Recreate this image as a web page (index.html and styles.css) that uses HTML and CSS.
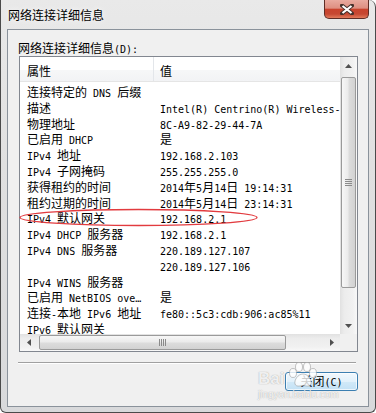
FILE: index.html
```html
<!DOCTYPE html>
<html lang="zh-CN">
<head>
    <meta charset="UTF-8">
    <title>网络连接详细信息</title>
    <link rel="stylesheet" href="styles.css">
</head>
<body>
    <div class="window">
        <div class="titlebar">
            <span class="title">网络连接详细信息</span>
            <div class="close">
                <svg width="14" height="11" viewBox="0 0 14 11">
                    <path d="M2 1.5 L12 9.5 M12 1.5 L2 9.5" stroke="#47312c" stroke-width="4" stroke-linecap="round"/>
                    <path d="M2.5 2 L11.5 9 M11.5 2 L2.5 9" stroke="#fff" stroke-width="2.2"/>
                </svg>
            </div>
        </div>
        <div class="client">
            <div class="caption">网络连接详细信息<span class="m">(D):</span></div>
            <div class="listview">
                <div class="lv-body">
                    <div class="lv-head">
                        <div class="h1">属性</div>
                        <div class="h2">值</div>
                    </div>
                    <div class="rows">
                        <div class="row"><div class="k">连接特定的<span class="m"> DNS </span>后缀</div><div class="v"></div></div>
                        <div class="row"><div class="k">描述</div><div class="v"><span class="m">Intel(R) Centrino(R) Wireless-N 1030</span></div></div>
                        <div class="row"><div class="k">物理地址</div><div class="v"><span class="m">8C-A9-82-29-44-7A</span></div></div>
                        <div class="row"><div class="k">已启用<span class="m"> DHCP</span></div><div class="v">是</div></div>
                        <div class="row"><div class="k"><span class="m">IPv4 </span>地址</div><div class="v"><span class="m">192.168.2.103</span></div></div>
                        <div class="row"><div class="k"><span class="m">IPv4 </span>子网掩码</div><div class="v"><span class="m">255.255.255.0</span></div></div>
                        <div class="row"><div class="k">获得租约的时间</div><div class="v"><span class="m">2014</span>年<span class="m">5</span>月<span class="m">14</span>日<span class="m"> 19:14:31</span></div></div>
                        <div class="row"><div class="k">租约过期的时间</div><div class="v"><span class="m">2014</span>年<span class="m">5</span>月<span class="m">14</span>日<span class="m"> 23:14:31</span></div></div>
                        <div class="row"><div class="k"><span class="m">IPv4 </span>默认网关</div><div class="v"><span class="m">192.168.2.1</span></div></div>
                        <div class="row"><div class="k"><span class="m">IPv4 DHCP </span>服务器</div><div class="v"><span class="m">192.168.2.1</span></div></div>
                        <div class="row"><div class="k"><span class="m">IPv4 DNS </span>服务器</div><div class="v"><span class="m">220.189.127.107</span></div></div>
                        <div class="row"><div class="k"></div><div class="v"><span class="m">220.189.127.106</span></div></div>
                        <div class="row"><div class="k"><span class="m">IPv4 WINS </span>服务器</div><div class="v"></div></div>
                        <div class="row"><div class="k">已启用<span class="m"> NetBIOS ove…</span></div><div class="v">是</div></div>
                        <div class="row"><div class="k">连接<span class="m">-</span>本地<span class="m"> IPv6 </span>地址</div><div class="v"><span class="m">fe80::5c3:cdb:906:ac85%11</span></div></div>
                        <div class="row"><div class="k"><span class="m">IPv6 </span>默认网关</div><div class="v"></div></div>
                    </div>
                </div>
                <div class="vscroll">
                    <div class="arrow">
                        <svg width="7" height="4" viewBox="0 0 7 4"><polygon points="3.5,0 7,4 0,4" fill="#505050"/></svg>
                    </div>
                    <div class="vthumb">
                        <svg width="7" height="7" viewBox="0 0 7 7">
                            <path d="M0 0.5H7M0 2.5H7M0 4.5H7M0 6.5H7" stroke="#8a8a8a" stroke-width="1"/>
                        </svg>
                    </div>
                    <div class="arrow down">
                        <svg width="7" height="4" viewBox="0 0 7 4"><polygon points="0,0 7,0 3.5,4" fill="#505050"/></svg>
                    </div>
                </div>
                <div class="hscroll">
                    <div class="arrow">
                        <svg width="4" height="7" viewBox="0 0 4 7"><polygon points="4,0 4,7 0,3.5" fill="#505050"/></svg>
                    </div>
                    <div class="hthumb">
                        <svg width="7" height="7" viewBox="0 0 7 7">
                            <path d="M0.5 0V7M2.5 0V7M4.5 0V7M6.5 0V7" stroke="#8a8a8a" stroke-width="1"/>
                        </svg>
                    </div>
                    <div class="arrow right">
                        <svg width="4" height="7" viewBox="0 0 4 7"><polygon points="0,0 4,3.5 0,7" fill="#505050"/></svg>
                    </div>
                </div>
                <div class="corner"></div>
            </div>
            <div class="sep"></div>
            <div class="buttons">
                <button type="button" class="btn">关闭<span class="m">(C)</span></button>
            </div>
        </div>

        <!-- red marker drawn over the list -->
        <svg class="mark" width="376" height="413" viewBox="0 0 376 413">
            <ellipse cx="138.5" cy="217.5" rx="118.5" ry="8" fill="none" stroke="#e23b3f" stroke-width="1.3"/>
        </svg>

        <div class="wm">
            <span class="wm-bai">Bai</span>
            <svg class="wm-paw" width="30" height="26" viewBox="0 0 30 26">
                <g fill="rgba(255,255,255,0.8)" stroke="rgba(140,140,140,0.5)" stroke-width="1">
                    <ellipse cx="5" cy="11" rx="3.5" ry="4.5"/>
                    <ellipse cx="11" cy="5" rx="3.5" ry="4.5"/>
                    <ellipse cx="19" cy="5" rx="3.5" ry="4.5"/>
                    <ellipse cx="25" cy="11" rx="3.5" ry="4.5"/>
                    <path d="M15 12 C10 12 6 18 7 22 C8 25 12 24 15 23.5 C18 24 22 25 23 22 C24 18 20 12 15 12 Z"/>
                </g>
            </svg>
            <div class="wm-url">jingyan.baidu.com</div>
        </div>
    </div>
</body>
</html>
```

FILE: styles.css
```css
body {
    margin: 0;
    font-family: "Noto Sans CJK SC", sans-serif;
    font-size: 12px;
    color: #000;
}
.window {
    position: relative;
    width: 376px;
    height: 413px;
    box-sizing: border-box;
    padding: 0 6px 5px;
    border: 1px solid #4a4a4a;
    border-top: 0;
    border-radius: 0 7px 6px 6px;
    background: linear-gradient(#e9e9e9, #e0e0e0 40%, #d8d9db);
    display: flex;
    flex-direction: column;
}
.titlebar {
    height: 29px;
    display: flex;
    flex: none;
}
.title {
    padding: 7px 0 0 1px;
    line-height: 16px;
    text-shadow: 0 0 6px #fff;
}
.close {
    margin-left: auto;
    width: 45px;
    height: 19px;
    box-sizing: border-box;
    border: 1px solid #5e2d26;
    border-top: 0;
    border-radius: 0 0 5px 5px;
    background: linear-gradient(#e9aa9f 0%, #de8f81 45%, #c9432d 52%, #c64832 78%, #e27a5b 100%);
    display: flex;
    align-items: center;
    justify-content: center;
}
.client {
    flex: 1;
    border: 1px solid #8a929b;
    background: #f0f0f0;
    padding: 9px 10px 0 11px;
    display: flex;
    flex-direction: column;
}
.caption {
    height: 17px;
    line-height: 17px;
    margin-left: -1px;
}
.m {
    font-family: "DejaVu Sans Mono", "Liberation Mono", monospace;
    font-size: 10px;
}

/* list view */
.listview {
    width: 339px;
    height: 296px;
    box-sizing: border-box;
    border: 1px solid #828790;
    background: #fff;
    display: grid;
    grid-template-columns: 1fr 17px;
    grid-template-rows: 1fr 17px;
}
.lv-body {
    overflow: hidden;
    white-space: nowrap;
}
.lv-head {
    display: flex;
    height: 24px;
    border-bottom: 1px solid #e5e5e5;
    background: linear-gradient(#fff 0%, #fff 55%, #f6f7f8 56%, #f2f3f5 100%);
    line-height: 16px;
}
.h1 {
    width: 134px;
    box-sizing: border-box;
    padding: 6px 0 0 7px;
    border-right: 1px solid #e3e6ea;
}
.h2 {
    padding: 6px 0 0 6px;
}
.rows {
    padding-top: 2px;
}
.row {
    display: flex;
    height: 15.8px;
    line-height: 15.8px;
}
.k {
    width: 134px;
    flex: none;
    box-sizing: border-box;
    padding-left: 7px;
}
.v {
    padding-left: 6px;
}

/* scroll bars */
.vscroll {
    display: flex;
    flex-direction: column;
    background: linear-gradient(to right, #e1e1e1, #ececec 25%, #f1f1f1 75%, #f8f8f8);
}
.hscroll {
    display: flex;
    background: linear-gradient(#e1e1e1, #ececec 25%, #f1f1f1 75%, #f8f8f8);
}
.arrow {
    width: 17px;
    height: 17px;
    flex: none;
    display: flex;
    align-items: center;
    justify-content: center;
}
.vscroll .down {
    margin-top: auto;
}
.hscroll .right {
    margin-left: auto;
}
.vthumb {
    margin: 3px 1px 0 1px;
    height: 211px;
    box-sizing: border-box;
    border: 1px solid #9a9a9a;
    border-radius: 2px;
    background: linear-gradient(to right, #f7f7f7, #ebebeb 45%, #dcdcdc 55%, #d2d2d2);
    display: flex;
    align-items: center;
    justify-content: center;
}
.hthumb {
    margin: 1px 0 1px 2px;
    width: 247px;
    box-sizing: border-box;
    border: 1px solid #9a9a9a;
    border-radius: 2px;
    background: linear-gradient(#f7f7f7, #ebebeb 45%, #dcdcdc 55%, #d2d2d2);
    display: flex;
    align-items: center;
    justify-content: center;
}
.corner {
    background: #f0f0f0;
}

.sep {
    margin: 10px 0 0 -1px;
    width: 338px;
    border-top: 1px solid #a0a0a0;
    border-bottom: 1px solid #fff;
}
.buttons {
    display: flex;
    justify-content: flex-end;
    margin-top: 8px;
}
.btn {
    width: 73px;
    height: 19px;
    box-sizing: border-box;
    padding: 0;
    border: 1px solid #3c7fb1;
    border-radius: 3px;
    background: linear-gradient(#f1f8fd, #e2f1fb 50%, #d1e9f8 52%, #c3e1f5);
    box-shadow: inset 0 0 0 1px rgba(255, 255, 255, 0.7);
    font-family: "Noto Sans CJK SC", sans-serif;
    font-size: 12px;
    line-height: 16px;
    color: #000;
}

/* overlays */
.mark {
    position: absolute;
    left: -1px;
    top: 0;
    pointer-events: none;
}
.wm {
    position: absolute;
    left: 257px;
    top: 362px;
    width: 100px;
    height: 40px;
    pointer-events: none;
}
.wm-bai {
    position: absolute;
    left: 0;
    top: 8px;
    font-family: "Liberation Sans", sans-serif;
    font-weight: bold;
    font-size: 17px;
    line-height: 17px;
    color: rgba(255, 255, 255, 0.85);
    text-shadow: 0 0 1px rgba(110, 110, 110, 0.7);
}
.wm-paw {
    position: absolute;
    left: 30px;
    top: 0;
}
.wm-url {
    position: absolute;
    left: 0;
    top: 28px;
    font-family: "Liberation Sans", sans-serif;
    font-size: 10px;
    line-height: 10px;
    color: rgba(255, 255, 255, 0.9);
    text-shadow: 0 0 1px rgba(110, 110, 110, 0.7);
}
```
